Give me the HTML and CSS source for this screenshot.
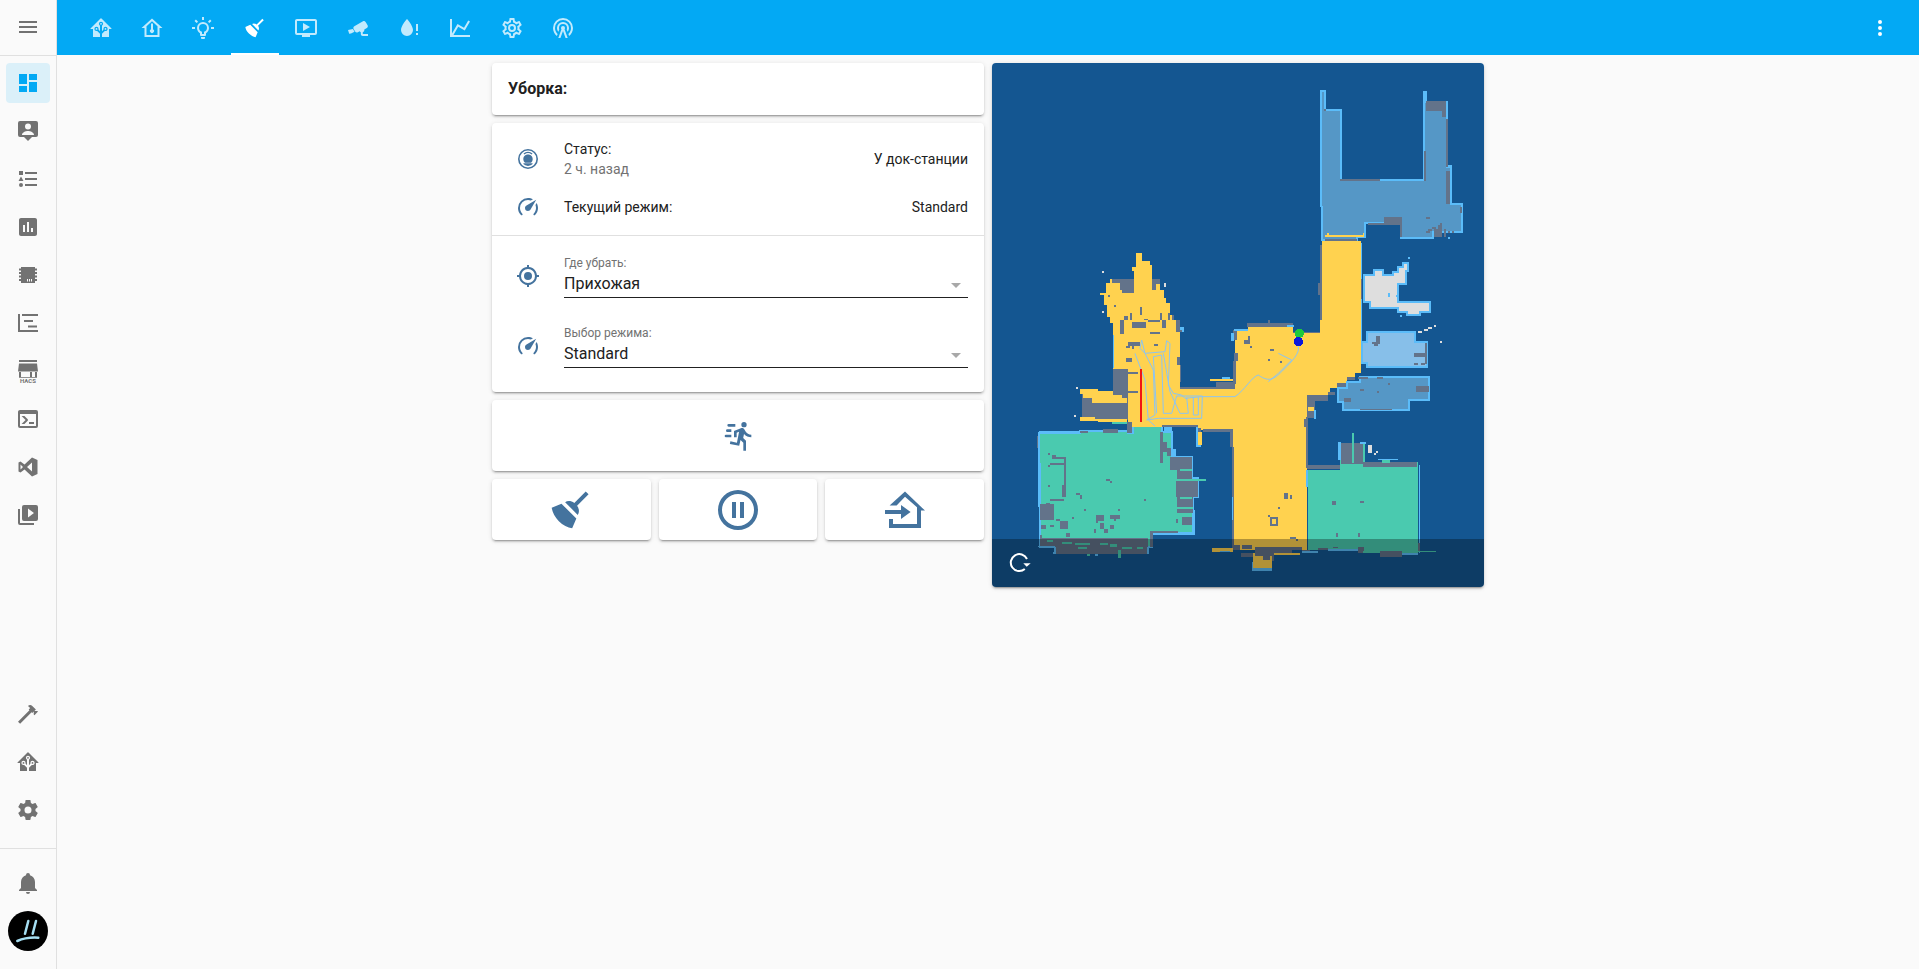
FILE: index.html
```html
<!DOCTYPE html>
<html lang="ru">
<head>
<meta charset="utf-8">
<title>Уборка</title>
<link rel="stylesheet" href="styles.css">
</head>
<body>
<div class="app">
  <aside class="sidebar">
    <div class="side-head"><svg class="i" viewBox="0 0 24 24"><path d="M3,6H21V8H3V6M3,11H21V13H3V11M3,16H21V18H3V16Z"/></svg></div>
    <nav class="side-list">
      <div class="nav-item active"><span class="nav-bg"><svg class="i" viewBox="0 0 24 24"><path d="M13,3V9H21V3M13,21H21V11H13M3,21H11V15H3M3,13H11V3H3V13Z"/></svg></span></div>
      <div class="nav-item"><span class="nav-bg"><svg class="i" viewBox="0 0 24 24"><path fill-rule="evenodd" d="M4 2H20a2 2 0 0 1 2 2V16a2 2 0 0 1-2 2H16L12 22L8 18H4a2 2 0 0 1-2-2V4a2 2 0 0 1 2-2ZM12 4.500a3 3 0 1 0 0 6a3 3 0 0 0 0-6ZM6 16H18C18 13.500 14.500 12 12 12S6 13.500 6 16Z"/></svg></span></div>
      <div class="nav-item"><span class="nav-bg"><svg class="i" viewBox="0 0 24 24"><path d="M5,9.5L7.5,14H2.5L5,9.5M3,4H7V8H3V4M5,20A2,2 0 0,0 7,18A2,2 0 0,0 5,16A2,2 0 0,0 3,18A2,2 0 0,0 5,20M9,5V7H21V5H9M9,19H21V17H9V19M9,13H21V11H9V13Z"/></svg></span></div>
      <div class="nav-item"><span class="nav-bg"><svg class="i" viewBox="0 0 24 24"><path d="M19 3H5C3.900 3 3 3.900 3 5V19C3 20.100 3.900 21 5 21H19C20.100 21 21 20.100 21 19V5C21 3.900 20.100 3 19 3M9 17H7V10H9V17M13 17H11V7H13V17M17 17H15V13H17V17Z"/></svg></span></div>
      <div class="nav-item"><span class="nav-bg"><svg class="i" viewBox="0 0 24 24"><path fill-rule="evenodd" d="M5 4H19V5.500H21V7.500H19V9H21V11H19V12.500H21V14.500H19V16H21V18H19V20H5V18H3V16H5V14.500H3V12.500H5V11H3V9H5V7.500H3V5.500H5ZM11 16V18.500H12V16ZM13 16V18.500H14V16ZM15 16V18.500H16V16Z"/></svg></span></div>
      <div class="nav-item"><span class="nav-bg"><svg class="i" viewBox="0 0 24 24"><path d="M2 3H4V19H22V21H2ZM6 3H22V5H6ZM8 9H17V11H8ZM12 14.500H21V16.500H12Z"/></svg></span></div>
      <div class="nav-item"><span class="nav-bg"><svg class="i hacs" viewBox="0 0 24 24"><path d="M3 1H21V3H3ZM3 4.500H21L22 12.500H2ZM3 13H5V18H14V13H16V18H19V13H21V18.800H3Z"/><text class="hacs-text" x="12" y="23.700" text-anchor="middle">HACS</text></svg></span></div>
      <div class="nav-item"><span class="nav-bg"><svg class="i" viewBox="0 0 24 24"><path d="M20,19V7H4V19H20M20,3A2,2 0 0,1 22,5V19A2,2 0 0,1 20,21H4A2,2 0 0,1 2,19V5C2,3.89 2.9,3 4,3H20M13,17V15H18V17H13M9.58,13L5.57,9H8.4L11.7,12.3C12.09,12.69 12.09,13.33 11.7,13.72L8.42,17H5.59L9.58,13Z"/></svg></span></div>
      <div class="nav-item"><span class="nav-bg"><svg class="i" viewBox="0 0 24 24"><path fill-rule="evenodd" d="M16 2.500L21.500 5V19L16 21.500L8.500 14.500L4.500 17.500L2.500 16.500V7.500L4.500 6.500L8.500 9.500ZM16 7.500L11 12L16 16.500ZM4.500 9.500V14.500L7 12Z"/></svg></span></div>
      <div class="nav-item"><span class="nav-bg"><svg class="i" viewBox="0 0 24 24"><path d="M4,6H2V20A2,2 0 0,0 4,22H18V20H4M20,2H8A2,2 0 0,0 6,4V16A2,2 0 0,0 8,18H20A2,2 0 0,0 22,16V4A2,2 0 0,0 20,2M12,14.5V5.5L18,10L12,14.5Z"/></svg></span></div>
    </nav>
    <div class="side-list side-tools">
      <div class="nav-item"><span class="nav-bg"><svg class="i" viewBox="0 0 24 24"><path d="M2 19.63L13.43 8.2L12.72 7.5L14.14 6.07L12 3.89C13.2 2.7 15.09 2.7 16.27 3.89L19.87 7.5L18.45 8.91H21.29L22 9.62L18.45 13.21L17.74 12.5V9.62L16.27 11.04L15.56 10.33L4.13 21.76L2 19.63Z"/></svg></span></div>
      <div class="nav-item"><span class="nav-bg"><svg class="i" viewBox="0 0 24 24"><path d="M21.8,13H20V21H13V17.67L15.79,14.88L16.5,15C17.66,15 18.6,14.06 18.6,12.9C18.6,11.74 17.66,10.8 16.5,10.8A2.1,2.1 0 0,0 14.4,12.9L14.5,13.61L13,15.13V9.65C13.66,9.29 14.1,8.6 14.1,7.8A2.1,2.1 0 0,0 12,5.7A2.1,2.1 0 0,0 9.9,7.8C9.9,8.6 10.34,9.29 11,9.65V15.13L9.5,13.61L9.6,12.9A2.1,2.1 0 0,0 7.5,10.8A2.1,2.1 0 0,0 5.4,12.9A2.1,2.1 0 0,0 7.5,15L8.21,14.88L11,17.67V21H4V13H2.25C1.83,13 1.42,13 1.42,12.79C1.43,12.57 1.85,12.15 2.28,11.72L11,3C11.33,2.67 11.67,2.33 12,2.33C12.33,2.33 12.67,2.67 13,3L21.79,11.79C22.18,12.18 22.58,12.57 22.56,12.79C22.55,13 22.17,13 21.8,13M7.5,12A0.9,0.9 0 0,1 8.4,12.9A0.9,0.9 0 0,1 7.5,13.8A0.9,0.9 0 0,1 6.6,12.9A0.9,0.9 0 0,1 7.5,12M16.5,12C17,12 17.4,12.4 17.4,12.9C17.4,13.4 17,13.8 16.5,13.8A0.9,0.9 0 0,1 15.6,12.9A0.9,0.9 0 0,1 16.5,12M12,6.9C12.5,6.9 12.9,7.3 12.9,7.8C12.9,8.3 12.5,8.7 12,8.7C11.5,8.7 11.1,8.3 11.1,7.8C11.1,7.3 11.5,6.9 12,6.9Z"/></svg></span></div>
      <div class="nav-item"><span class="nav-bg"><svg class="i" viewBox="0 0 24 24"><path d="M12,15.5A3.5,3.5 0 0,1 8.5,12A3.5,3.5 0 0,1 12,8.5A3.5,3.5 0 0,1 15.5,12A3.5,3.5 0 0,1 12,15.5M19.43,12.97C19.47,12.65 19.5,12.33 19.5,12C19.5,11.67 19.47,11.34 19.43,11L21.54,9.37C21.73,9.22 21.78,8.95 21.66,8.73L19.66,5.27C19.54,5.05 19.27,4.96 19.05,5.05L16.56,6.05C16.04,5.66 15.5,5.32 14.87,5.07L14.5,2.42C14.46,2.18 14.25,2 14,2H10C9.75,2 9.54,2.18 9.5,2.42L9.13,5.07C8.5,5.32 7.96,5.66 7.44,6.05L4.95,5.05C4.73,4.96 4.46,5.05 4.34,5.27L2.34,8.73C2.21,8.95 2.27,9.22 2.46,9.37L4.57,11C4.53,11.34 4.5,11.67 4.5,12C4.5,12.33 4.53,12.65 4.57,12.97L2.46,14.63C2.27,14.78 2.21,15.05 2.34,15.27L4.34,18.73C4.46,18.95 4.73,19.03 4.95,18.95L7.44,17.94C7.96,18.34 8.5,18.68 9.13,18.93L9.5,21.58C9.54,21.82 9.75,22 10,22H14C14.25,22 14.46,21.82 14.5,21.58L14.87,18.93C15.5,18.67 16.04,18.34 16.56,17.94L19.05,18.95C19.27,19.03 19.54,18.95 19.66,18.73L21.66,15.27C21.78,15.05 21.73,14.78 21.54,14.63L19.43,12.97Z"/></svg></span></div>
    </div>
    <div class="side-divider"></div>
    <div class="nav-item"><span class="nav-bg"><svg class="i" viewBox="0 0 24 24"><path d="M21,19V20H3V19L5,17V11C5,7.9 7.03,5.17 10,4.29C10,4.19 10,4.1 10,4A2,2 0 0,1 12,2A2,2 0 0,1 14,4C14,4.1 14,4.19 14,4.29C16.97,5.17 19,7.9 19,11V17L21,19M14,21A2,2 0 0,1 12,23A2,2 0 0,1 10,21"/></svg></span></div>
    <div class="avatar-wrap">
      <svg class="avatar" viewBox="0 0 40 40"><circle cx="20" cy="20" r="20" fill="#000"/><path class="avatar-line" d="M20.300 10L17 22.700M28 10L24.700 22.700M9.300 30C15 27.500 24 26.300 30.300 26.700"/></svg>
    </div>
  </aside>

  <div class="main">
    <header class="topbar">
      <div class="tabs">
        <div class="tab"><svg class="i" viewBox="0 0 24 24"><path d="M21.8,13H20V21H13V17.67L15.79,14.88L16.5,15C17.66,15 18.6,14.06 18.6,12.9C18.6,11.74 17.66,10.8 16.5,10.8A2.1,2.1 0 0,0 14.4,12.9L14.5,13.61L13,15.13V9.65C13.66,9.29 14.1,8.6 14.1,7.8A2.1,2.1 0 0,0 12,5.7A2.1,2.1 0 0,0 9.9,7.8C9.9,8.6 10.34,9.29 11,9.65V15.13L9.5,13.61L9.6,12.9A2.1,2.1 0 0,0 7.5,10.8A2.1,2.1 0 0,0 5.4,12.9A2.1,2.1 0 0,0 7.5,15L8.21,14.88L11,17.67V21H4V13H2.25C1.83,13 1.42,13 1.42,12.79C1.43,12.57 1.85,12.15 2.28,11.72L11,3C11.33,2.67 11.67,2.33 12,2.33C12.33,2.33 12.67,2.67 13,3L21.79,11.79C22.18,12.18 22.58,12.57 22.56,12.79C22.55,13 22.17,13 21.8,13M7.5,12A0.9,0.9 0 0,1 8.4,12.9A0.9,0.9 0 0,1 7.5,13.8A0.9,0.9 0 0,1 6.6,12.9A0.9,0.9 0 0,1 7.5,12M16.5,12C17,12 17.4,12.4 17.4,12.9C17.4,13.4 17,13.8 16.5,13.8A0.9,0.9 0 0,1 15.6,12.9A0.9,0.9 0 0,1 16.5,12M12,6.9C12.5,6.9 12.9,7.3 12.9,7.8C12.9,8.3 12.5,8.7 12,8.7C11.5,8.7 11.1,8.3 11.1,7.8C11.1,7.3 11.5,6.9 12,6.9Z"/></svg></div>
        <div class="tab"><svg class="i" viewBox="0 0 24 24"><path fill-rule="evenodd" d="M12 2.500L22.500 12H19.500V21H4.500V12H1.500ZM12 5.200L6.500 10.200V19H17.500V10.200ZM11 7.500H13V13.300A2 2 0 1 1 11 13.300Z"/></svg></div>
        <div class="tab"><svg class="i" viewBox="0 0 24 24"><path d="M20,11H23V13H20V11M1,11H4V13H1V11M13,1V4H11V1H13M4.92,3.5L7.05,5.64L5.63,7.05L3.5,4.93L4.92,3.5M16.95,5.63L19.07,3.5L20.5,4.93L18.37,7.05L16.95,5.63M12,6A6,6 0 0,1 18,12C18,14.22 16.79,16.16 15,17.2V19A1,1 0 0,1 14,20H10A1,1 0 0,1 9,19V17.2C7.21,16.16 6,14.22 6,12A6,6 0 0,1 12,6M14,21V22A1,1 0 0,1 13,23H11A1,1 0 0,1 10,22V21H14M11,18H13V15.87C14.73,15.43 16,13.86 16,12A4,4 0 0,0 12,8A4,4 0 0,0 8,12C8,13.86 9.27,15.43 11,15.87V18Z"/></svg></div>
        <div class="tab selected"><svg class="i" viewBox="0 0 24 24"><path d="M19.36,2.72L20.78,4.14L15.06,9.85C16.13,11.39 16.28,13.24 15.38,14.44L9.06,8.12C10.26,7.22 12.11,7.37 13.65,8.44L19.36,2.72M5.93,17.57C3.92,15.56 2.69,13.16 2.35,10.92L7.23,8.83L14.67,16.27L12.58,21.15C10.34,20.81 7.94,19.58 5.93,17.57Z"/></svg></div>
        <div class="tab"><svg class="i" viewBox="0 0 24 24"><path d="M21,3H3C1.89,3 1,3.89 1,5V17A2,2 0 0,0 3,19H8V21H16V19H21A2,2 0 0,0 23,17V5C23,3.89 22.1,3 21,3M21,17H3V5H21M16,11L9,15V7"/></svg></div>
        <div class="tab"><svg class="i" viewBox="0 0 24 24"><path d="M18.15,4.94C17.77,4.91 17.37,5 17,5.2L8.35,10.2C7.39,10.76 7.07,12 7.62,12.94L9.12,15.53C9.67,16.5 10.89,16.82 11.85,16.27L13.65,15.23C13.92,15.69 14.32,16.06 14.81,16.27V18.04C14.81,19.13 15.69,20 16.77,20H22V18.04H16.77V16.27C17.88,15.8 18.5,14.65 18.31,13.46L20.85,12C21.81,11.44 22.14,10.21 21.58,9.25L20.08,6.65C19.73,6.05 19.12,5 18.15,4.94M6.9 13L2 14L3.200 17.800L5 17.500L8.500 15.800Z"/></svg></div>
        <div class="tab"><svg class="i" viewBox="0 0 24 24"><path d="M10 3C10 3 4 9.500 4 14A6 6 0 0 0 16 14C16 9.500 10 3 10 3ZM19 8H21V15H19ZM19 17H21V19H19Z"/></svg></div>
        <div class="tab"><svg class="i" viewBox="0 0 24 24"><path d="M16,11.78L20.24,4.45L21.97,5.45L16.74,14.5L10.23,10.75L5.46,19H22V21H2V3H4V17.54L9.5,8L16,11.78Z"/></svg></div>
        <div class="tab"><svg class="i" viewBox="0 0 24 24"><path d="M12,8A4,4 0 0,1 16,12A4,4 0 0,1 12,16A4,4 0 0,1 8,12A4,4 0 0,1 12,8M12,10A2,2 0 0,0 10,12A2,2 0 0,0 12,14A2,2 0 0,0 14,12A2,2 0 0,0 12,10M10,22C9.75,22 9.54,21.82 9.5,21.58L9.13,18.93C8.5,18.68 7.96,18.34 7.44,17.94L4.95,18.95C4.73,19.03 4.46,18.95 4.34,18.73L2.34,15.27C2.21,15.05 2.27,14.78 2.46,14.63L4.57,12.97L4.5,12L4.57,11L2.46,9.37C2.27,9.22 2.21,8.95 2.34,8.73L4.34,5.27C4.46,5.05 4.73,4.96 4.95,5.05L7.44,6.05C7.96,5.66 8.5,5.32 9.13,5.07L9.5,2.42C9.54,2.18 9.75,2 10,2H14C14.25,2 14.46,2.18 14.5,2.42L14.87,5.07C15.5,5.32 16.04,5.66 16.56,6.05L19.05,5.05C19.27,4.96 19.54,5.05 19.66,5.27L21.66,8.73C21.79,8.95 21.73,9.22 21.54,9.37L19.43,11L19.5,12L19.43,13L21.54,14.63C21.73,14.78 21.79,15.05 21.66,15.27L19.66,18.73C19.54,18.95 19.27,19.04 19.05,18.95L16.56,17.95C16.04,18.34 15.5,18.68 14.87,18.93L14.5,21.58C14.46,21.82 14.25,22 14,22H10M11.25,4L10.88,6.61C9.68,6.86 8.62,7.5 7.85,8.39L5.44,7.35L4.69,8.65L6.8,10.2C6.4,11.37 6.4,12.64 6.8,13.8L4.68,15.36L5.43,16.66L7.86,15.62C8.63,16.5 9.68,17.14 10.87,17.38L11.24,20H12.76L13.13,17.39C14.32,17.14 15.37,16.5 16.14,15.62L18.57,16.66L19.32,15.36L17.2,13.81C17.6,12.64 17.6,11.37 17.2,10.2L19.31,8.65L18.56,7.35L16.15,8.39C15.38,7.5 14.32,6.86 13.12,6.62L12.75,4H11.25Z"/></svg></div>
        <div class="tab"><svg class="i" viewBox="0 0 24 24"><path d="M12,10A2,2 0 0,1 14,12C14,12.5 13.82,12.94 13.53,13.29L16.7,22H14.57L12,14.93L9.43,22H7.3L10.47,13.29C10.18,12.94 10,12.5 10,12A2,2 0 0,1 12,10M12,8A4,4 0 0,0 8,12C8,12.5 8.1,13 8.28,13.46L7.4,15.86C6.53,14.81 6,13.47 6,12A6,6 0 0,1 12,6A6,6 0 0,1 18,12C18,13.47 17.47,14.81 16.6,15.86L15.72,13.46C15.9,13 16,12.5 16,12A4,4 0 0,0 12,8M12,4A8,8 0 0,0 4,12C4,14.36 5,16.5 6.64,17.94L5.92,19.94C3.54,18.11 2,15.23 2,12A10,10 0 0,1 12,2A10,10 0 0,1 22,12C22,15.23 20.46,18.11 18.08,19.94L17.36,17.94C19,16.5 20,14.36 20,12A8,8 0 0,0 12,4Z"/></svg></div>
      </div>
      <svg class="i dots" viewBox="0 0 24 24"><path d="M12,16A2,2 0 0,1 14,18A2,2 0 0,1 12,20A2,2 0 0,1 10,18A2,2 0 0,1 12,16M12,10A2,2 0 0,1 14,12A2,2 0 0,1 12,14A2,2 0 0,1 10,12A2,2 0 0,1 12,10M12,4A2,2 0 0,1 14,6A2,2 0 0,1 12,8A2,2 0 0,1 10,6A2,2 0 0,1 12,4Z"/></svg>
    </header>

    <main class="view">
      <section class="column">
        <div class="card title-card">Уборка:</div>

        <div class="card">
          <div class="entities">
            <div class="row">
              <svg class="i row-icon" viewBox="0 0 24 24"><path fill-rule="evenodd" d="M12 2A10 10 0 1 1 12 22A10 10 0 1 1 12 2ZM12 3.600A8.400 8.400 0 1 0 12 20.400A8.400 8.400 0 1 0 12 3.600ZM7.500 6.500A7 7 0 0 1 16.500 6.500L15.500 7.500A5.600 5.600 0 0 0 8.500 7.500ZM12 7.500C9 7.500 7.300 9.800 7.300 12C7.300 13.500 8 15 9 15.800H15C16 15 16.700 13.500 16.700 12C16.700 9.800 15 7.500 12 7.500ZM7 16.800A7 7 0 0 0 17 16.800L16 16.300H8Z"/></svg>
              <div class="row-text"><div>Статус:</div><div class="muted">2 ч. назад</div></div>
              <div class="row-value">У док-станции</div>
            </div>
            <div class="row">
              <svg class="i row-icon" viewBox="0 0 24 24"><path d="M12,16A3,3 0 0,1 9,13C9,11.88 9.61,10.9 10.5,10.39L20.21,4.77L14.68,14.35C14.18,15.33 13.17,16 12,16M12,3C13.81,3 15.5,3.5 16.97,4.32L14.87,5.53C14,5.19 13,5 12,5A8,8 0 0,0 4,13C4,15.21 4.89,17.21 6.34,18.65H6.35C6.74,19.04 6.74,19.67 6.35,20.06C5.96,20.45 5.32,20.45 4.93,20.07V20.07C3.12,18.26 2,15.76 2,13A10,10 0 0,1 12,3M22,13C22,15.76 20.88,18.26 19.07,20.07V20.07C18.68,20.45 18.05,20.45 17.66,20.06C17.27,19.67 17.27,19.04 17.66,18.65V18.65C19.11,17.2 20,15.21 20,13C20,12 19.81,11 19.46,10.1L20.68,8C21.5,9.5 22,11.18 22,13Z"/></svg>
              <div class="row-text">Текущий режим:</div>
              <div class="row-value">Standard</div>
            </div>
          </div>
          <div class="card-divider"></div>
          <div class="selects">
            <div class="select-row">
              <svg class="i row-icon select-icon" viewBox="0 0 24 24"><path d="M12,8A4,4 0 0,1 16,12A4,4 0 0,1 12,16A4,4 0 0,1 8,12A4,4 0 0,1 12,8M3.05,13H1V11H3.05C3.5,6.83 6.83,3.5 11,3.05V1H13V3.05C17.17,3.5 20.5,6.83 20.95,11H23V13H20.95C20.5,17.17 17.17,20.5 13,20.95V23H11V20.95C6.83,20.5 3.5,17.17 3.05,13M12,5A7,7 0 0,0 5,12A7,7 0 0,0 12,19A7,7 0 0,0 19,12A7,7 0 0,0 12,5Z"/></svg>
              <div class="select">
                <div class="select-label">Где убрать:</div>
                <div class="select-value">Прихожая<span class="select-arrow"></span></div>
              </div>
            </div>
            <div class="select-row">
              <svg class="i row-icon select-icon" viewBox="0 0 24 24"><path d="M12,16A3,3 0 0,1 9,13C9,11.88 9.61,10.9 10.5,10.39L20.21,4.77L14.68,14.35C14.18,15.33 13.17,16 12,16M12,3C13.81,3 15.5,3.5 16.97,4.32L14.87,5.53C14,5.19 13,5 12,5A8,8 0 0,0 4,13C4,15.21 4.89,17.21 6.34,18.65H6.35C6.74,19.04 6.74,19.67 6.35,20.06C5.96,20.45 5.32,20.45 4.93,20.07V20.07C3.12,18.26 2,15.76 2,13A10,10 0 0,1 12,3M22,13C22,15.76 20.88,18.26 19.07,20.07V20.07C18.68,20.45 18.05,20.45 17.66,20.06C17.27,19.67 17.27,19.04 17.66,18.65V18.65C19.11,17.2 20,15.21 20,13C20,12 19.81,11 19.46,10.1L20.68,8C21.5,9.5 22,11.18 22,13Z"/></svg>
              <div class="select">
                <div class="select-label">Выбор режима:</div>
                <div class="select-value">Standard<span class="select-arrow"></span></div>
              </div>
            </div>
          </div>
        </div>

        <div class="card run-card">
          <svg class="i run-icon" viewBox="0 0 24 24"><path d="M16.5,5.5A2,2 0 0,0 18.5,3.5A2,2 0 0,0 16.5,1.5A2,2 0 0,0 14.5,3.5A2,2 0 0,0 16.5,5.5M12.9,19.4L13.9,15L16,17V23H18V15.5L15.9,13.5L16.5,10.5C17.89,12.09 19.89,13 22,13V11C20.24,11.03 18.6,10.11 17.7,8.6L16.7,7C16.34,6.4 15.7,6 15,6C14.7,6 14.5,6.1 14.2,6.1L9,8.3V13H11V9.6L12.8,8.9L11.2,17L6.3,16L5.9,18L12.9,19.4M4,9A1,1 0 0,1 3,8A1,1 0 0,1 4,7H7V9H4M5,5A1,1 0 0,1 4,4A1,1 0 0,1 5,3H10V5H5M3,13A1,1 0 0,1 2,12A1,1 0 0,1 3,11H7V13H3Z"/></svg>
        </div>

        <div class="actions">
          <div class="card action-card"><svg class="i action-icon" viewBox="0 0 24 24"><path d="M19.36,2.72L20.78,4.14L15.06,9.85C16.13,11.39 16.28,13.24 15.38,14.44L9.06,8.12C10.26,7.22 12.11,7.37 13.65,8.44L19.36,2.72M5.93,17.57C3.92,15.56 2.69,13.16 2.35,10.92L7.23,8.83L14.67,16.27L12.58,21.15C10.34,20.81 7.94,19.58 5.93,17.57Z"/></svg></div>
          <div class="card action-card"><svg class="i action-icon" viewBox="0 0 24 24"><path d="M13,16V8H15V16H13M9,16V8H11V16H9M12,2A10,10 0 0,1 22,12A10,10 0 0,1 12,22A10,10 0 0,1 2,12A10,10 0 0,1 12,2M12,4A8,8 0 0,0 4,12A8,8 0 0,0 12,20A8,8 0 0,0 20,12A8,8 0 0,0 12,4Z"/></svg></div>
          <div class="card action-card"><svg class="i action-icon" viewBox="0 0 24 24"><path d="M12 2.800L22 12.300H20V21H4V16.500H6V19H18V10.600L12 5.400L7.800 9.800H4.300ZM2 12H10V9.500L14.800 13L10 16.500V14H2Z"/></svg></div>
        </div>
      </section>

      <section class="column">
        <div class="card map-card">
          <svg class="map" viewBox="992 63 492 524" shape-rendering="crispEdges">
            <rect class="m-bg" x="992" y="63" width="492" height="524"/>
            <g transform="translate(985 60) scale(.33333)">
              <path class="m-room e" d="M1008 93H1020V150H1068V360H1316V96H1322V125H1385V320H1397V432H1430V516H1345V534H1248V490H1140V530H1115V540H1010Z"/>
              <path class="m-wall" d="M1322 123h60v30h-60zM1372 150h12v20h-12zM1383 177h6v145h-6zM1383 333h12v100h-12zM1317 273h6v90h-6zM1065 357h120v6h-120zM1197 471h54v24h-54zM1149 489h54v6h-54zM1245 490h6v40h-6zM1018 147h6v6h-6zM1323 471h12v6h-12zM1341 501h12v6h-12zM1329 507h12v6h-12zM1323 513h12v6h-12zM1347 507h24v24h-24zM1359 495h12v12h-12zM1365 489h6v6h-6zM1377 507h6v24h-6zM1389 513h6v6h-6zM1401 513h6v6h-6zM1425 441h6v18h-6z"/>
              <path class="m-edge" d="M1389 531h6v6h-6zM1389 315h12v6h-12z"/>
              <path class="m-yel" d="M1015 531h6v-6h6v-6h6v6h102v-6h3v12H1015z"/>
              <path class="m-wall" d="M1005 555h6v255h-6zM998 669h7v36h-7zM1020 537h95v6h-95zM1011 543h12v12h-12zM1125 657h6v60h-6z"/>
              <rect class="m-yel" x="1011" y="543" width="116" height="267"/>
              <path class="m-wall" d="M1020 537h95v6h-95z"/>
              <path class="m-edge" d="M1127 549h4v108h-4zM1127 717h4v93h-4z"/>
              <path class="m-white e" d="M1137 645H1167V630H1195V645H1225V635H1240V620H1255V610H1270V633H1262V672H1240V725H1335V755H1305V765H1265V755H1240V743H1155V725H1137Z"/>
              <path class="m-edge" d="M1269 591h6v6h-6zM1209 699h6v12h-6zM1233 705h6v6h-6zM1245 765h6v6h-6z"/>
              <path class="m-white" d="M1317 807h12v3h-12zM1347 795h6v6h-6z"/>
              <rect class="m-wall" x="380" y="657" width="145" height="45"/>
              <path class="m-yel" d="M453 579H471V603H495V615H501V690H513V672H525V690H537V715H543V730H555V765H567V780H585V810H390V790H375V770H365V735H357V705H345V699H363V669H375V657H381V669H405V690H411V699H447V633H441V621H453Z"/>
              <path class="m-wall" d="M369 705h6v6h-6zM387 735h6v6h-6zM465 741h6v24h-6zM435 759h6v24h-6zM417 768h12v12h-12zM477 777h12v6h-12zM525 759h6v24h-6zM549 759h6v30h-6zM561 765h6v30h-6zM405 789h12v21h-12zM417 795h90v15h-90zM513 795h12v6h-12zM537 783h12v21h-12z"/>
              <path class="m-white" d="M351 633h6v6h-6zM351 753h6v6h-6zM537 669h6v12h-6z"/>
              <path class="m-edge" d="M585 801h12v9h-12z"/>
            </g>
            <g transform="translate(985 320) scale(.33333)">
              <path class="m-grn e" d="M163 340H285V333H430V340H445V318H530V335H560V410H620V475H640V530H625V640H500V680H490V700H210V680H165Z"/>
              <path class="m-yel" d="M385 0H585V205H750V30H790V18H925V35H1005V0H1127V160H1110V172H1085V190H1060V205H1035V225H965V690H745V330H640V322H530V320H430V147H385Z"/>
              <path class="m-grn" d="M968 450H1065V370H1140V425H1300V700H1135V690H968Z"/>
              <path class="m-wall" d="M1068 370h65v62h-65zM965 225h65v18h-65zM965 243h24v50h-24zM957 298h9v22h-9zM963 290h6v155h-6zM965 435h100v12h-100zM1135 425h160v15h-160zM1030 215h20v10h-20zM1055 190h30v12h-30zM1085 172h25v8h-25z"/>
              <rect class="m-yel" x="969" y="261" width="18" height="12"/>
              <path class="m-grn" d="M1100 340h8v90h-8zM1190 421h25v8h-25z"/>
              <path class="m-edge" d="M1303 435h3v265h-3zM1060 365h9v55h-9zM1125 365h18v6h-18zM1180 417h60v4h-60zM963 450h5v50h-5zM987 270h6v26h-6z"/>
              <path class="m-white" d="M1149 375h12v24h-12zM1167 398h6v6h-6zM1173 392h6v6h-6z"/>
              <path class="m-lblue e" d="M1145 35H1290V65H1325V140H1145V130H1131V65H1145Z"/>
              <path class="m-room e" d="M1125 170H1332V240H1272V270H1075V245H1060V205H1085V185H1125Z"/>
              <path class="m-wall" d="M1287 98h40v12h-40zM1319 70h6v62h-6zM1287 128h12v6h-12zM1307 128h12v6h-12zM1160 65h12v6h-12zM1172 48h12v25h-12zM1166 70h12v8h-12zM1293 197h40v18h-40zM1125 207h12v6h-12zM1077 235h20v12h-20zM1175 213h6v6h-6zM1120 170h30v6h-30zM1175 170h20v6h-20zM1125 266h95v5h-95zM1210 188h6v6h-6z"/>
              <path class="m-white" d="M1299 33h12v6h-12zM1317 27h12v6h-12zM1329 21h12v6h-12zM1347 15h6v6h-6zM1365 63h6v6h-6zM273 201h6v6h-6zM267 285h6v6h-6z"/>
              <path class="m-wall" d="M385 147h45v70h-45zM290 215h140v85h-140z"/>
              <path class="m-yel" d="M285 208H340V213H385V225H410V235H425V250H320V235H295V222H285ZM285 292H330V297H425V307H340V302H285Z"/>
              <path class="m-grn" d="M380 305h45v8h-45z"/>
              <path class="m-wall" d="M430 155h28v6h-28zM430 213h28v5h-28zM425 305h15v35h-15zM355 327h45v13h-45zM285 333h24v7h-24zM155 348h8v35h-8zM745 30h12v30h-12zM747 98h12v25h-12zM745 123h9v70h-9zM693 185h57v20h-57zM585 200h165v7h-165zM575 110h10v25h-10zM585 135h4v50h-4zM785 8h140v14h-140zM849 0h6v8h-6zM925 35h80v5h-80zM790 48h6v24h-6zM778 60h18v12h-18zM530 315h110v6h-110zM655 327h90v8h-90zM735 335h10v45h-10zM740 380h6v310h-6zM640 325h8v25h-8zM525 335h8v95h-8zM535 365h12v30h-12zM547 385h12v24h-12zM555 411h65v40h-65zM575 450h45v30h-45zM573 483h66v47h-66zM575 530h50v50h-50z"/>
              <path class="m-grn" d="M585 447h36v6h-36zM573 477h90v6h-90zM585 531h36v6h-36zM575 561h48v6h-48z"/>
              <path class="m-edge" d="M640 320h-6v60h14v-4h-10zM745 530h-4v70h4zM560 387h12v25h-12zM620 470h5v5h-5zM159 340h4v220h-4zM163 333h122v4h-122zM309 333h46v4h-46zM537 320h24v14h-24zM625 570h4v72h-4zM500 640h129v4h-129zM738 40h10v24h-10zM748 28h42v4h-42zM905 14h22v6h-22zM585 20h12v15h-12zM383 45h4v100h-4zM1127 0h4v130h-4zM710 170h25v7h-25z"/>
              <rect class="m-yel" x="675" y="177" width="70" height="6"/>
              <rect class="m-yel" x="640" y="335" width="10" height="40"/>
              <path class="m-wall" d="M189 399h6v6h-6zM201 405h12v12h-12zM213 411h27v6h-27zM237 411h6v120h-6zM195 429h42v6h-42zM189 435h6v6h-6zM231 495h12v36h-12zM195 537h42v6h-42zM189 495h6v6h-6zM273 519h12v6h-12zM285 525h6v12h-6zM363 477h12v6h-12zM375 483h6v6h-6zM477 537h6v6h-6zM297 567h6v6h-6zM399 567h6v6h-6zM165 553h42v48h-42zM183 549h12v6h-12zM333 585h24v18h-24zM333 603h6v6h-6zM375 585h30v12h-30zM387 597h6v6h-6zM261 591h6v6h-6zM213 597h12v6h-12zM225 603h24v24h-24zM169 615h15v12h-15zM195 615h12v6h-12zM243 639h12v12h-12zM327 627h6v12h-6zM345 609h12v18h-12zM357 627h12v12h-12zM375 615h12v12h-12zM573 597h6v12h-6zM591 591h30v24h-30zM165 645h6v35h-6zM495 632h85v8h-85zM495 640h8v40h-8zM1041 543h12v12h-12zM1125 543h12v6h-12zM1053 639h6v12h-6zM1119 639h6v12h-6zM897 519h12v18h-12zM915 525h6v12h-6zM879 561h6v6h-6zM849 585h6v6h-6zM855 591h24v6h-24zM855 612h24v6h-24zM855 591h6v27h-6zM873 591h6v27h-6zM915 651h18v6h-18zM933 657h6v6h-6z"/>
              <path class="m-wall" d="M855 87h12v6h-12zM885 123h6v6h-6zM849 117h6v6h-6zM795 78h6v6h-6zM405 0h12v42h-12zM441 6h42v18h-42zM489 0h36v6h-36zM531 0h12v24h-12zM573 0h12v36h-12zM429 66h36v12h-36zM423 78h12v6h-12zM441 75h6v12h-6zM423 114h18v12h-18zM507 72h12v6h-12zM495 36h30v6h-30zM585 30h6v6h-6z"/>
              <path class="m-path" d="M940 80C945 100 920 125 895 150C870 175 855 190 820 165C800 170 780 210 750 230H650L600 235L590 225L565 220L550 195L555 70L545 62L540 95L480 100L465 85L470 60L480 100L505 150L510 285L485 300L520 295L650 295L652 228L575 228L560 280L535 280L530 105L505 110L515 280M535 100L555 215L585 280H610L605 232M625 232V285H640L640 232M880 100L920 120L880 160L850 185M450 100L480 180L490 300L510 318"/>
              <path class="m-red" d="M465 147h6v158h-6z"/>
              <circle class="m-green" cx="943" cy="40" r="14"/>
              <circle class="m-blue" cx="940" cy="65" r="14"/>
              <path class="m-wall" d="M170 655h320v25H170zM212 680h275v22H212zM320 655h6v25h-6z"/>
              <path class="m-grn" d="M185 660h20v6h-20zM230 665h30v8h-30zM270 668h45v8h-45zM345 668h25v6h-25zM375 673h20v8h-20zM410 680h30v6h-30zM455 680h20v6h-20zM280 682h25v5h-25zM400 690h8v24h-8zM305 702h10v6h-10z"/>
              <path class="m-edge" d="M159 677h50v5h-50zM205 697h6v6h-6zM330 702h10v6h-10z"/>
              <path class="m-yel" d="M680 683H745V695H680ZM770 700H945V706H770ZM805 706H860V745H805Z"/>
              <path class="m-wall" d="M745 675h20v15h-20zM772 675h30v12h-30zM810 682h50v25h-50zM860 682h60v18h-60zM920 680h30v10h-30zM767 700h36v12h-36zM860 700h8v22h-8zM835 706h20v14h-20zM950 690h25v4h-25zM1120 680h18v20h-18zM1185 692h65v18h-65zM1300 670h6v25h-6zM1000 685h30v4h-30zM1045 681h15v4h-15z"/>
              <path class="m-edge" d="M800 745h62v7h-62zM800 725h5v20h-5zM705 693h30v4h-30zM950 693h50v5h-50zM1030 687h90v5h-90zM1250 700h50v5h-50z"/>
              <path class="m-grn" d="M1135 692h50v8h-50zM1300 692h53v5h-53zM1250 695h50v5h-50z"/>
            </g>
          </svg>
          <div class="map-footer">
            <svg class="refresh" viewBox="0 0 24 24"><path class="refresh-arc" d="M19 8A8.500 8.500 0 1 0 16.800 18.100"/><path class="refresh-head" d="M15.300 12.300H22.700L18.700 15.700Z"/></svg>
          </div>
        </div>
      </section>
    </main>
  </div>
</div>
</body>
</html>
```

FILE: styles.css
```css
* { box-sizing: border-box; }

html, body {
  margin: 0;
  height: 100%;
  overflow: hidden;
  background: #fafafa;
  color: #212121;
  font-family: Roboto, "Noto Sans", sans-serif;
  font-size: 14px;
}

.app { display: flex; height: 969px; }

.i { width: 24px; height: 24px; fill: currentColor; display: block; flex: none; }

/* sidebar */
.sidebar {
  width: 57px;
  flex: none;
  display: flex;
  flex-direction: column;
  border-right: 1px solid #e0e0e0;
  background: #fafafa;
  color: #727272;
}
.side-head {
  height: 56px;
  flex: none;
  display: flex;
  align-items: center;
  padding-left: 16px;
  padding-bottom: 1px;
  border-bottom: 1px solid #e0e0e0;
}
.side-list { padding-top: 3px; flex: 1; }
.side-tools { flex: none; padding-top: 0; margin-bottom: 14px; }
.nav-item { height: 48px; display: flex; align-items: center; padding-left: 6px; }
.nav-bg {
  width: 44px;
  height: 40px;
  border-radius: 4px;
  display: flex;
  align-items: center;
  justify-content: center;
}
.active .nav-bg { background: rgba(3, 169, 244, .12); color: #03a9f4; }
.hacs { overflow: visible; }
.hacs-text { font: 700 6px Roboto, sans-serif; }
.side-divider { height: 1px; background: #e0e0e0; margin-bottom: 10px; flex: none; }
.avatar-wrap { padding: 4px 0 18px 8px; flex: none; }
.avatar { width: 40px; height: 40px; display: block; }
.avatar-line { fill: none; stroke: #a5def2; stroke-width: 2.500; stroke-linecap: round; }

/* top bar */
.main { flex: 1; min-width: 0; display: flex; flex-direction: column; }
.topbar {
  height: 55px;
  flex: none;
  background: #03a9f4;
  color: #fff;
  display: flex;
  align-items: center;
  justify-content: space-between;
  padding-left: 18px;
  padding-right: 27px;
}
.tabs { display: flex; height: 100%; }
.tab {
  width: 51.4px;
  position: relative;
  display: flex;
  align-items: center;
  justify-content: center;
  color: rgba(255, 255, 255, .76);
}
.tab.selected { color: #fff; }
.tab.selected::after {
  content: "";
  position: absolute;
  left: 1.7px;
  right: 1.7px;
  bottom: 0;
  height: 2px;
  background: #fff;
}

/* view */
.view {
  flex: 1;
  display: flex;
  justify-content: center;
  gap: 8px;
  padding-top: 8px;
}
.column { width: 492px; display: flex; flex-direction: column; gap: 8px; }
.card {
  background: #fff;
  border-radius: 4px;
  box-shadow: 0 2px 2px 0 rgba(0, 0, 0, .14), 0 1px 5px 0 rgba(0, 0, 0, .12), 0 3px 1px -2px rgba(0, 0, 0, .2);
}
.title-card {
  height: 52px;
  padding: 0 0 2px 16px;
  display: flex;
  align-items: center;
  font-size: 16px;
  font-weight: 700;
}

.entities { padding: 16px 16px 8px; display: flex; flex-direction: column; gap: 8px; }
.row { display: flex; align-items: center; height: 40px; }
.row-icon { color: #44739e; margin: 0 8px; }
.row-text { flex: 1; margin-left: 16px; line-height: 20px; }
.row-value { text-align: right; }
.muted { color: #727272; }
.card-divider { height: 1px; background: #e0e0e0; }
.selects { padding: 19px 16px 24px; display: flex; flex-direction: column; gap: 27px; }
.select-row { display: flex; align-items: flex-start; }
.select-icon { margin-top: 9px; }
.select { flex: 1; margin-left: 16px; border-bottom: 1px solid #212121; height: 43px; }
.select-label { font-size: 12px; line-height: 17px; color: #727272; }
.select-value { font-size: 16px; line-height: 24px; display: flex; justify-content: space-between; align-items: center; padding-right: 7px; }
.select-arrow {
  width: 0;
  height: 0;
  border-left: 5px solid transparent;
  border-right: 5px solid transparent;
  border-top: 5px solid #a8a8a8;
  margin-top: 2px;
}

.run-card { height: 71px; display: flex; align-items: center; justify-content: center; color: #44739e; }
.run-icon { width: 32px; height: 32px; }
.actions { display: grid; grid-template-columns: repeat(3, 1fr); gap: 8px; }
.action-card { height: 61px; display: flex; align-items: center; justify-content: center; color: #44739e; }
.action-icon { width: 48px; height: 48px; }

/* map */
.map-card { height: 524px; position: relative; overflow: hidden; }
.map { display: block; width: 492px; height: 524px; }
.map-footer {
  position: absolute;
  left: 0;
  right: 0;
  bottom: 0;
  height: 48px;
  background: rgba(0, 0, 0, .3);
  display: flex;
  align-items: center;
  padding-left: 16px;
}
.refresh { width: 24px; height: 24px; display: block; }
.refresh-arc { fill: none; stroke: #fff; stroke-width: 2; }
.refresh-head { fill: #fff; }

.m-bg { fill: #145691; }
.m-room { fill: #5597c6; }
.m-lblue { fill: #87bfe9; }
.m-white { fill: #dedede; }
.m-yel { fill: #ffd24f; }
.m-grn { fill: #4acaaf; }
.m-wall { fill: #63738a; }
.m-edge { fill: #5bbcf9; }
.m-red { fill: #f01414; }
.m-green { fill: #1ec93c; }
.m-blue { fill: #0a18dc; }
.m-path { fill: none; stroke: #8cc4f2; stroke-width: 3; shape-rendering: geometricPrecision; }
.e { stroke: #5bbcf9; stroke-width: 6; }

.dots { color: #fff; }
```
